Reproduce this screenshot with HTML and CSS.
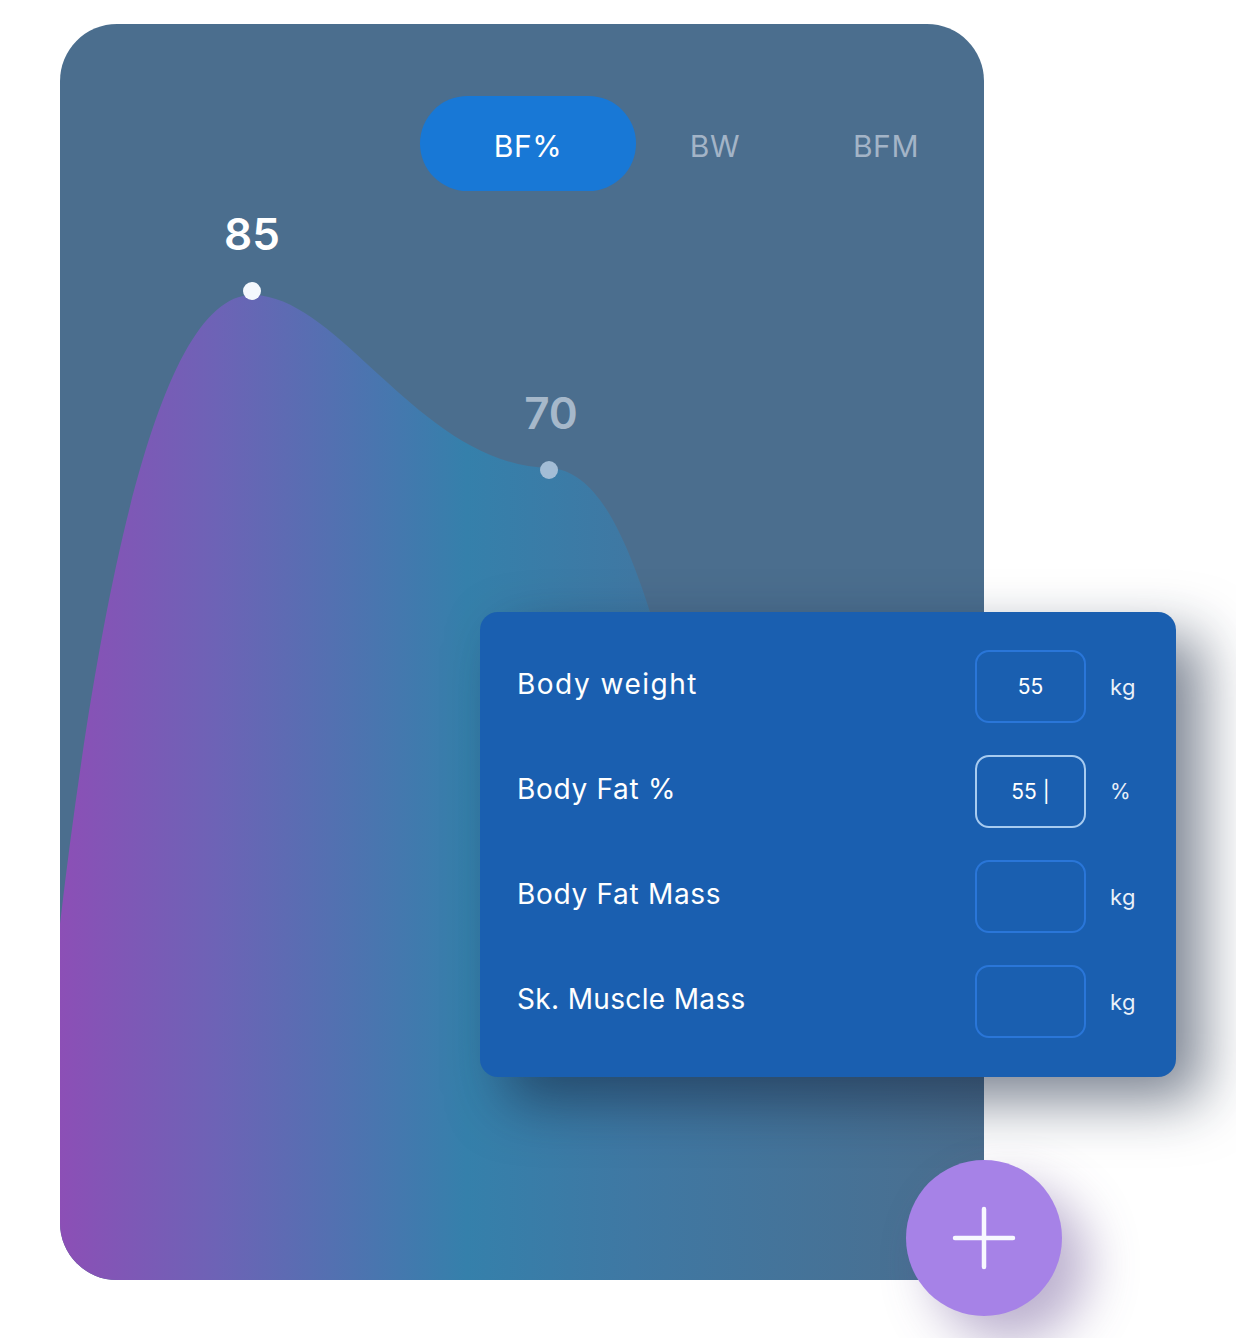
FILE: index.html
```html
<!DOCTYPE html>
<html lang="en">
<head>
<meta charset="utf-8">
<title>Body composition</title>
<link rel="stylesheet" href="styles.css">
</head>
<body>
<div class="stage">
  <section class="card">
    <svg class="chart" width="924" height="1256" viewBox="0 0 924 1256" aria-hidden="true">
      <defs>
        <linearGradient id="fillGrad" gradientUnits="userSpaceOnUse" x1="0" y1="0" x2="924" y2="0">
          <stop offset="0" stop-color="#8c4fb6"/>
          <stop offset="0.17" stop-color="#6d63b6"/>
          <stop offset="0.44" stop-color="#3580ab"/>
          <stop offset="0.62" stop-color="#3f78a3"/>
          <stop offset="1" stop-color="#4b6e8e"/>
        </linearGradient>
      </defs>
      <path d="M0 1256 L0 900 C40 560 100 271 192 271 C280 271 360 441 489 444 C540 446 570 520 600 620 C660 820 760 990 924 1010 L924 1256 Z" fill="url(#fillGrad)"/>
      <circle cx="192" cy="267" r="9" fill="#f4f8fd"/>
      <circle cx="489" cy="446" r="9" fill="#a3bdd6"/>
    </svg>
    <nav class="tabs">
      <span class="tab tab-active">BF%</span>
      <span class="tab tab-bw">BW</span>
      <span class="tab tab-bfm">BFM</span>
    </nav>
    <div class="point point-main">85</div>
    <div class="point point-dim">70</div>
  </section>

  <form class="panel">
    <div class="row">
      <span class="label label-wide">Body weight</span>
      <span class="field">55</span>
      <span class="unit">kg</span>
    </div>
    <div class="row">
      <span class="label">Body Fat %</span>
      <span class="field field-active">55 |</span>
      <span class="unit unit-pct">%</span>
    </div>
    <div class="row">
      <span class="label">Body Fat Mass</span>
      <span class="field"></span>
      <span class="unit">kg</span>
    </div>
    <div class="row">
      <span class="label label-tight">Sk. Muscle Mass</span>
      <span class="field"></span>
      <span class="unit">kg</span>
    </div>
  </form>

  <button class="fab" type="button" aria-label="Add">
    <svg width="64" height="64" viewBox="0 0 64 64">
      <path d="M32 3 V61 M3 32 H61" stroke="#f7f8ff" stroke-width="4.5" stroke-linecap="round" fill="none"/>
    </svg>
  </button>
</div>
</body>
</html>
```

FILE: styles.css
```css
* { box-sizing: border-box; }

html, body {
  margin: 0;
  padding: 0;
  background: #ffffff;
}

body {
  font-family: "Inter", "Noto Sans", "Liberation Sans", sans-serif;
  color: #ffffff;
}

.stage {
  position: relative;
  width: 1236px;
  height: 1338px;
  overflow: hidden;
  padding: 24px 0 0 60px;
}

.card {
  position: relative;
  width: 924px;
  height: 1256px;
  background: #4b6e8e;
  border-radius: 57px 57px 0 57px;
  overflow: hidden;
  padding-top: 72px;
}

.chart {
  position: absolute;
  left: 0;
  top: 0;
  display: block;
}

.tabs {
  position: relative;
  display: flex;
  align-items: center;
  margin-left: 360px;
  height: 95px;
}

.tab {
  display: flex;
  align-items: center;
  justify-content: center;
  height: 95px;
  padding-top: 4px;
  font-size: 30px;
  font-weight: 400;
  color: #a3b4c7;
  letter-spacing: 0.6px;
}

.tab-active {
  width: 216px;
  border-radius: 48px;
  background: #1878d6;
  color: #ffffff;
}

.tab-bw { width: 158px; }
.tab-bfm { width: 184px; }

.point {
  position: absolute;
  width: 120px;
  margin-left: -60px;
  text-align: center;
  font-size: 44px;
  line-height: 1;
  font-weight: 600;
}

.point-main {
  left: 192px;
  top: 188px;
  color: #ffffff;
}

.point-dim {
  left: 491px;
  top: 367px;
  color: #a6b8ca;
}

.panel {
  position: absolute;
  left: 480px;
  top: 612px;
  width: 696px;
  height: 465px;
  margin: 0;
  padding: 38px 0 0 37px;
  background: #1a5fb0;
  border-radius: 18px;
  box-shadow: 26px 24px 56px rgba(18, 32, 58, 0.55);
  display: flex;
  flex-direction: column;
  gap: 32px;
}

.row {
  display: grid;
  grid-template-columns: 1fr 111px 90px;
  align-items: center;
  height: 73px;
}

.label {
  font-size: 28px;
  font-weight: 400;
  letter-spacing: 0.7px;
  margin-bottom: 6px;
}

.label-wide { letter-spacing: 1.5px; }
.label-tight { letter-spacing: 0.35px; }

.field {
  display: flex;
  align-items: center;
  justify-content: center;
  height: 73px;
  border: 2px solid #2a76d8;
  border-radius: 14px;
  font-size: 21px;
  color: #ffffff;
}

.field-active {
  border: 2px solid #a7cbf0;
}

.unit {
  padding-left: 24px;
  font-size: 22px;
  color: #e9f0f9;
  letter-spacing: 0.5px;
}

.unit-pct { font-size: 21px; }

.fab {
  position: absolute;
  left: 906px;
  top: 1160px;
  width: 156px;
  height: 156px;
  border: 0;
  padding: 0;
  border-radius: 50%;
  background: #a682e7;
  box-shadow: 26px 26px 50px rgba(96, 70, 140, 0.42);
  display: flex;
  align-items: center;
  justify-content: center;
}

.fab svg { display: block; }
```
